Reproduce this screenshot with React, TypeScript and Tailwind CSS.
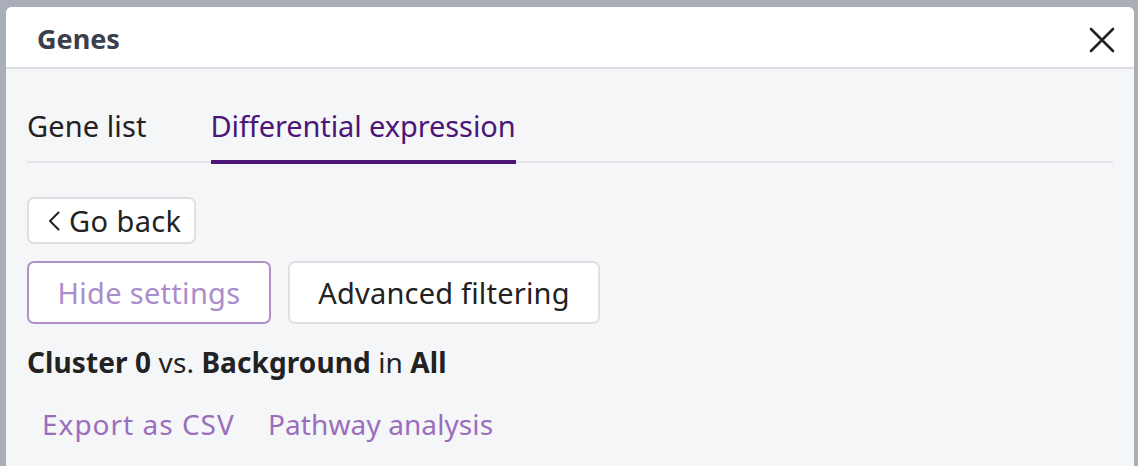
const font = { fontFamily: '"Noto Sans", "Open Sans", sans-serif' };

function CloseIcon() {
  return (
    <svg width="26" height="26" viewBox="0 0 26 26" fill="none" stroke="#222" strokeWidth="2.6" strokeLinecap="round">
      <path d="M2 2L24 24M24 2L2 24" />
    </svg>
  );
}

function BackChevron() {
  return (
    <svg width="12" height="20" viewBox="0 0 12 20" fill="none" stroke="#222" strokeWidth="2" strokeLinecap="round" strokeLinejoin="round">
      <path d="M10.5 1.5L2 10l8.5 8.5" />
    </svg>
  );
}

export default function App() {
  return (
    <div className="h-[466px] w-[1138px] overflow-hidden bg-[#a9aeb9] pl-[6px] pr-[4px] pt-[7px]" style={font}>
      <div className="flex h-full flex-col overflow-hidden rounded-t-[6px] bg-[#f5f6f8]">
        <div className="flex h-[62px] shrink-0 items-center justify-between border-b-2 border-[#dcdee3] bg-white pl-[31px] pr-[19px]">
          <h1 className="pt-[4px] text-[27px] font-bold text-[#3b404c]">Genes</h1>
          <div className="pt-[6px]">
            <CloseIcon />
          </div>
        </div>

        <div className="flex flex-col px-[21px]">
          <div className="mt-[39px] flex items-start gap-[64px] border-b-2 border-[#e4e5e8] text-[29px] leading-[36px]">
            <div className="pb-[17px] tracking-[0.1px] text-[#222]">Gene list</div>
            <div className="-mb-[3px] border-b-4 border-[#4b1678] pb-[16px] tracking-[-0.1px] text-[#4b1678]">
              Differential expression
            </div>
          </div>

          <div className="mt-[34px] flex">
            <button className="flex h-[47px] items-center gap-[9px] rounded-[7px] border-2 border-[#dedfe2] bg-white pl-[19px] pr-[12px] text-[29px] tracking-[0.4px] text-[#222]">
              <BackChevron />
              Go back
            </button>
          </div>

          <div className="mt-[17px] flex gap-[17px]">
            <button className="h-[63px] w-[244px] rounded-[7px] border-2 border-[#ae8fc8] bg-white text-[29px] tracking-[0.3px] text-[#ab8ec9]">
              Hide settings
            </button>
            <button className="h-[63px] w-[312px] rounded-[7px] border-2 border-[#dedfe2] bg-white text-[29px] tracking-[0.2px] text-[#222]">
              Advanced filtering
            </button>
          </div>

          <div className="mt-[20px] text-[28px] leading-[36px] tracking-[0.1px] text-[#222]">
            <span className="font-bold">Cluster 0</span> vs. <span className="font-bold">Background</span> in{" "}
            <span className="font-bold">All</span>
          </div>

          <div className="mt-[26px] flex pl-[15px] text-[28px] leading-[36px] text-[#9b6ebd]">
            <span className="w-[226px] tracking-[1px]">Export as CSV</span>
            <span className="tracking-[0.1px]">Pathway analysis</span>
          </div>
        </div>
      </div>
    </div>
  );
}
